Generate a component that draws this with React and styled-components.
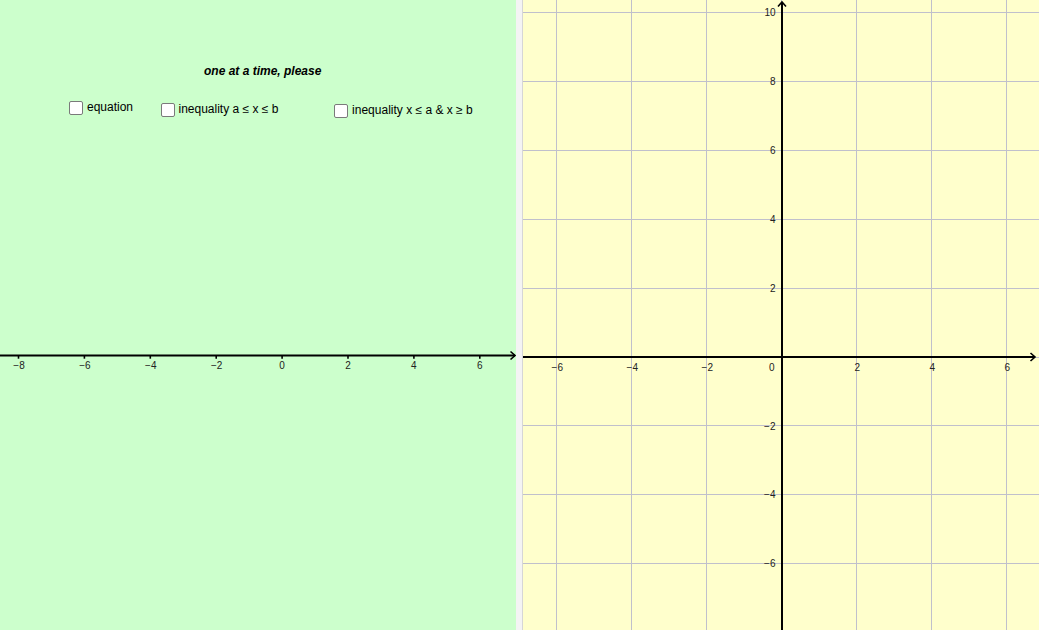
import React from "react";
import styled, { createGlobalStyle } from "styled-components";

const GlobalStyle = createGlobalStyle`
  html, body {
    margin: 0;
    padding: 0;
    overflow: hidden;
    background: #fff;
  }
  body {
    font-family: "Liberation Sans", Arial, sans-serif;
  }
`;

const Applet = styled.div`
  display: flex;
  width: 1039px;
  height: 630px;
`;

const GraphicsView = styled.div`
  display: grid;
  width: 516px;
  height: 630px;
  background: ${props => props.$bg};
  overflow: hidden;

  > * {
    grid-area: 1 / 1;
  }
`;

const Splitter = styled.div`
  width: 7px;
  box-sizing: border-box;
  background: #f4f4f4;
  border-right: 1px solid #d6d6d6;
`;

const Canvas = styled.svg`
  display: block;
  font-family: "Liberation Sans", Arial, sans-serif;
  font-size: 10px;
`;

const Controls = styled.div`
  display: flex;
  flex-direction: column;
  align-items: flex-start;
  padding-top: 64px;
`;

const Caption = styled.div`
  margin-left: 204px;
  font-size: 12px;
  line-height: 14px;
  font-weight: bold;
  font-style: italic;
  color: #000;
`;

const OptionsRow = styled.div`
  display: flex;
  align-items: flex-start;
  margin-top: 22px;
  padding-left: 69px;
`;

const Option = styled.label`
  display: flex;
  align-items: flex-start;
  gap: 4px;
  flex: none;
  width: ${props => (props.$width ? `${props.$width}px` : "auto")};
  margin-top: ${props => props.$top}px;
  font-size: 12px;
  line-height: 14px;
  color: #000;
  cursor: pointer;
`;

const Box = styled.input`
  appearance: none;
  box-sizing: border-box;
  width: 14px;
  height: 14px;
  margin: 1px 0 0 0;
  background: #fff;
  border: 1.5px solid #7a7a7a;
  border-radius: 2px;
  cursor: pointer;
`;

const LABEL = "#222";
const AXIS = "#000";
const GRID = "#c0c0cc";

const minus = v => (v < 0 ? `\u2212${-v}` : `${v}`);

const NumberLine = () => {
  const ticks = [-8, -6, -4, -2, 0, 2, 4, 6];
  const y = 355.5;
  return (
    <Canvas width="516" height="630">
      <line x1="0" y1={y} x2="515" y2={y} stroke={AXIS} strokeWidth="2" />
      <polyline
        points={`510.5,${y - 4} 515,${y} 510.5,${y + 4}`}
        fill="none"
        stroke={AXIS}
        strokeWidth="1.6"
      />
      {ticks.map((n, i) => {
        const x = 18.5 + 65.9 * i;
        return (
          <g key={n}>
            <line x1={x} y1={y} x2={x} y2={y + 3.2} stroke={AXIS} strokeWidth="1.6" />
            <text x={n < 0 ? x + 0.5 : x} y="369" textAnchor="middle" fill={LABEL}>
              {minus(n)}
            </text>
          </g>
        );
      })}
    </Canvas>
  );
};

const CoordinateGrid = () => {
  const ox = 259;
  const oy = 357;
  const xs = [-3, -2, -1, 1, 2, 3];
  const ys = [5, 4, 3, 2, 1, -1, -2, -3];
  return (
    <Canvas width="516" height="630">
      {[-3, -2, -1, 0, 1, 2, 3].map(k => {
        const x = 258.5 + 75 * k;
        return <line key={`v${k}`} x1={x} y1="0" x2={x} y2="630" stroke={GRID} strokeWidth="1" />;
      })}
      {[-3, -2, -1, 0, 1, 2, 3, 4, 5].map(k => {
        const y = Math.floor(oy - 68.9 * k) + 0.5;
        return <line key={`h${k}`} x1="0" y1={y} x2="516" y2={y} stroke={GRID} strokeWidth="1" />;
      })}

      <line x1="0" y1={oy} x2="512" y2={oy} stroke={AXIS} strokeWidth="2" />
      <polyline
        points={`507.5,${oy - 4} 512,${oy} 507.5,${oy + 4}`}
        fill="none"
        stroke={AXIS}
        strokeWidth="1.6"
      />
      <line x1={ox} y1="2" x2={ox} y2="630" stroke={AXIS} strokeWidth="2" />
      <polyline
        points={`${ox - 4},6.5 ${ox},2 ${ox + 4},6.5`}
        fill="none"
        stroke={AXIS}
        strokeWidth="1.6"
      />

      {xs.map(k => (
        <text key={`xl${k}`} x={258.5 + 75 * k + 0.8} y="370.5" textAnchor="middle" fill={LABEL}>
          {minus(2 * k)}
        </text>
      ))}
      <text x="251.5" y="370.5" textAnchor="end" fill={LABEL}>
        0
      </text>

      {ys.map(k => (
        <text key={`yl${k}`} x="252.5" y={oy - 68.9 * k + 3.6} textAnchor="end" fill={LABEL}>
          {minus(2 * k)}
        </text>
      ))}
    </Canvas>
  );
};

const options = [
  { label: "equation", width: 91.5, top: 0 },
  { label: "inequality a \u2264 x \u2264 b", width: 173.6, top: 2 },
  { label: "inequality x \u2264 a & x \u2265 b", top: 3 },
];

export default function App() {
  return (
    <>
      <GlobalStyle />
      <Applet>
        <GraphicsView $bg="#ccffcc">
          <NumberLine />
          <Controls>
            <Caption>one at a time, please</Caption>
            <OptionsRow>
              {options.map(o => (
                <Option key={o.label} $width={o.width} $top={o.top}>
                  <Box type="checkbox" />
                  {o.label}
                </Option>
              ))}
            </OptionsRow>
          </Controls>
        </GraphicsView>
        <Splitter />
        <GraphicsView $bg="#ffffcc">
          <CoordinateGrid />
        </GraphicsView>
      </Applet>
    </>
  );
}
